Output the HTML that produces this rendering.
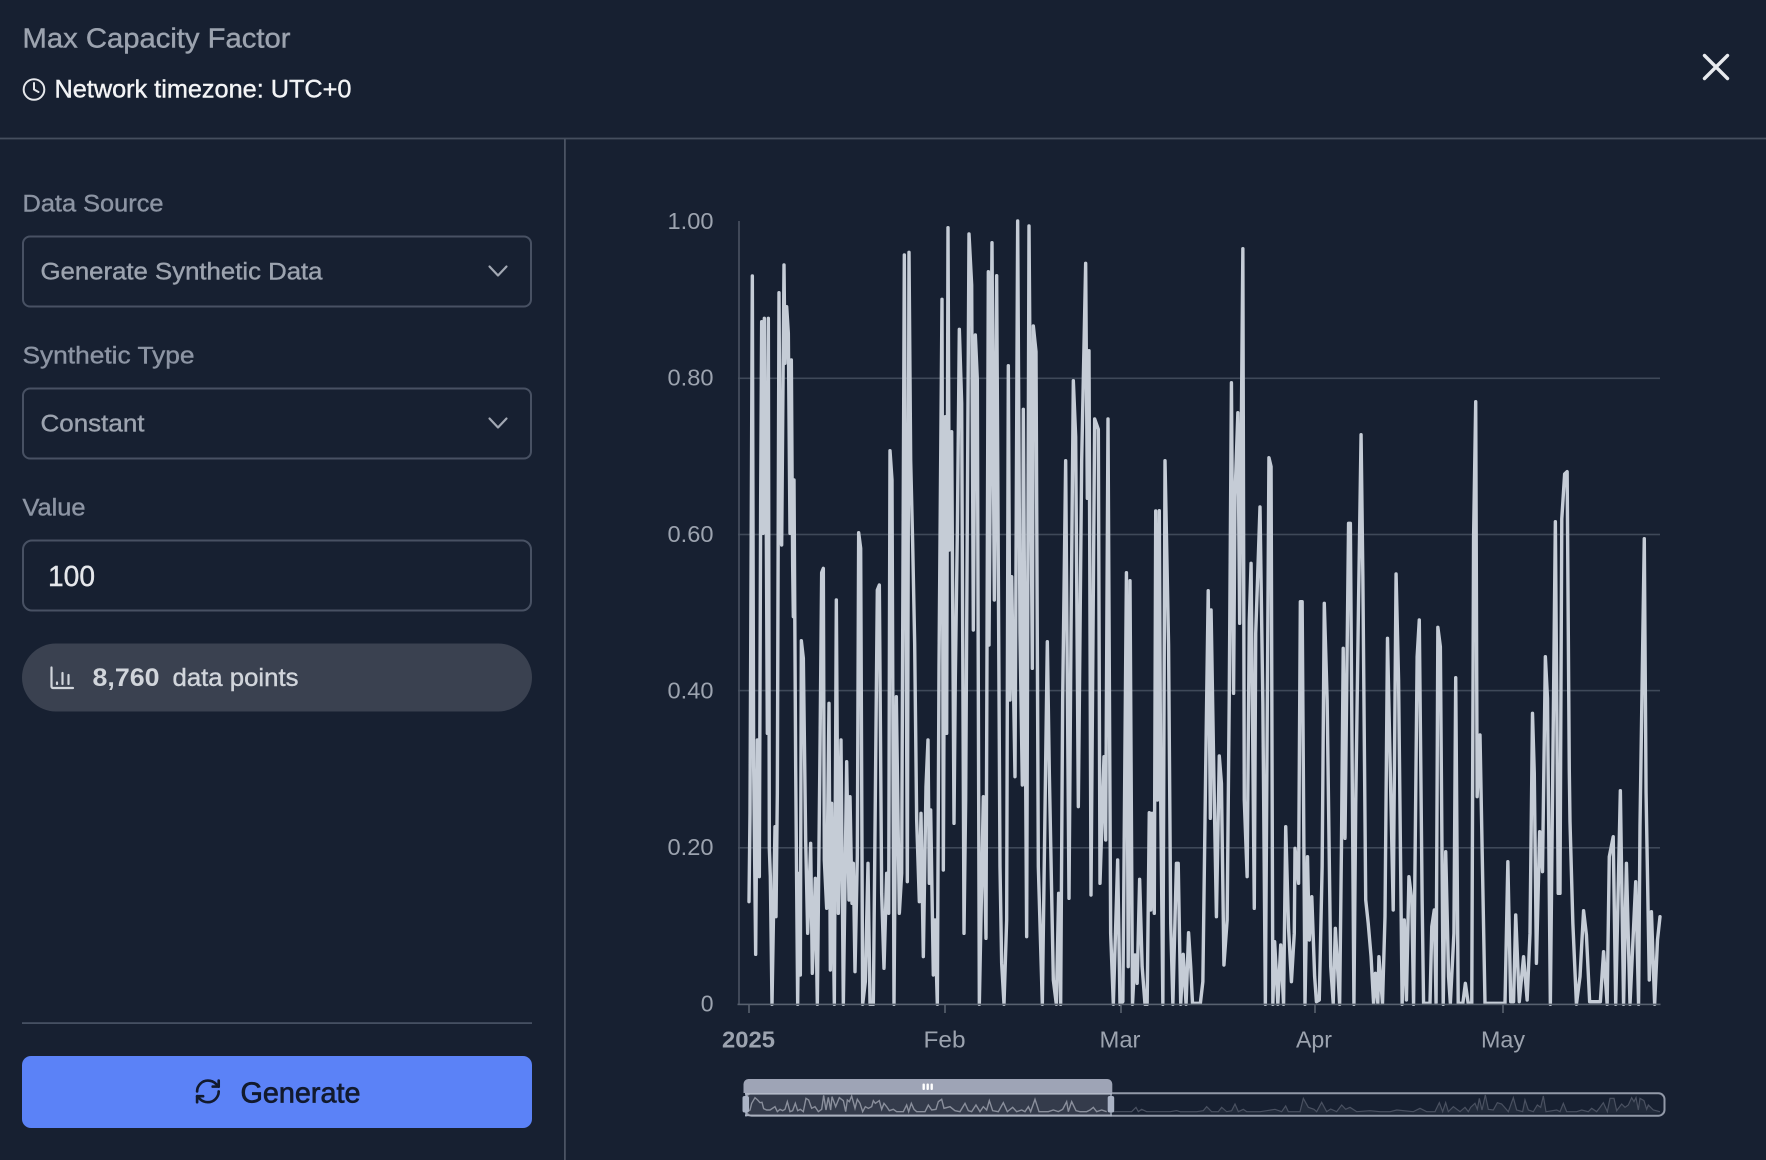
<!DOCTYPE html>
<html>
<head>
<meta charset="utf-8">
<title>Max Capacity Factor</title>
<style>
html,body{margin:0;padding:0;background:#172031;width:1766px;height:1160px;overflow:hidden}
svg{display:block}
text{font-family:"Liberation Sans",sans-serif;stroke-width:.4px}
</style>
</head>
<body>
<svg width="1766" height="1160" viewBox="0 0 1766 1160" xmlns="http://www.w3.org/2000/svg">
<rect width="1766" height="1160" fill="#172031"/>

<!-- header -->
<text x="22.5" y="47.5" font-size="28" fill="#9ca3af" stroke="#9ca3af" textLength="268" lengthAdjust="spacingAndGlyphs">Max Capacity Factor</text>
<g fill="none" stroke="#e5e7eb" stroke-width="2" stroke-linecap="round" stroke-linejoin="round">
<circle cx="34" cy="89.5" r="10.3"/>
<path d="M34 83v6.5l4.5 2.5"/>
</g>
<text x="54.5" y="97.3" font-size="25" fill="#f3f4f6" stroke="#f3f4f6" textLength="297" lengthAdjust="spacingAndGlyphs">Network timezone: UTC+0</text>
<path d="M1704.5 55.5L1727.5 78.5M1727.5 55.5L1704.5 78.5" stroke="#e8eaee" stroke-width="3.4" stroke-linecap="round" fill="none"/>
<rect x="0" y="137.6" width="1766" height="1.8" fill="#454e5e"/>
<rect x="564" y="139" width="1.8" height="1021" fill="#4a5363"/>

<!-- left form -->
<text x="22.5" y="211.7" font-size="24.5" fill="#8c94a3" stroke="#8c94a3" textLength="141" lengthAdjust="spacingAndGlyphs">Data Source</text>
<rect x="23" y="236.5" width="508" height="70" rx="7" fill="none" stroke="#485163" stroke-width="2"/>
<text x="40.5" y="279.3" font-size="24.5" fill="#9ca3af" stroke="#9ca3af" textLength="282" lengthAdjust="spacingAndGlyphs">Generate Synthetic Data</text>
<path d="M489.5 266.5l8.5 9 8.5-9" fill="none" stroke="#a2a8b3" stroke-width="2.2" stroke-linecap="round" stroke-linejoin="round"/>

<text x="22.5" y="363.3" font-size="24.5" fill="#8c94a3" stroke="#8c94a3" textLength="172" lengthAdjust="spacingAndGlyphs">Synthetic Type</text>
<rect x="23" y="388.5" width="508" height="70" rx="7" fill="none" stroke="#485163" stroke-width="2"/>
<text x="40.5" y="431.7" font-size="24.5" fill="#9ca3af" stroke="#9ca3af" textLength="104" lengthAdjust="spacingAndGlyphs">Constant</text>
<path d="M489.5 418.5l8.5 9 8.5-9" fill="none" stroke="#a2a8b3" stroke-width="2.2" stroke-linecap="round" stroke-linejoin="round"/>

<text x="22.5" y="515.6" font-size="24.5" fill="#8c94a3" stroke="#8c94a3" textLength="63" lengthAdjust="spacingAndGlyphs">Value</text>
<rect x="23" y="540.5" width="508" height="70" rx="9" fill="none" stroke="#485163" stroke-width="2"/>
<text x="48" y="586" font-size="29" fill="#e5e7eb" stroke="#e5e7eb" textLength="47" lengthAdjust="spacingAndGlyphs">100</text>

<rect x="22" y="643.5" width="510" height="68" rx="34" fill="#3a4150"/>
<g fill="none" stroke="#d1d5db" stroke-width="2.2" stroke-linecap="round" stroke-linejoin="round">
<path d="M51.5 667.5v19a1.5 1.5 0 0 0 1.5 1.5h20"/>
<path d="M57 682.5v1.5M62.5 673v11M68.5 675v9"/>
</g>
<text x="92.5" y="686" font-size="25" font-weight="700" fill="#d1d5db" textLength="67" lengthAdjust="spacingAndGlyphs">8,760</text>
<text x="172.5" y="686" font-size="25" fill="#d1d5db" stroke="#d1d5db" textLength="126" lengthAdjust="spacingAndGlyphs">data points</text>

<rect x="22" y="1022.2" width="510" height="1.8" fill="#465062"/>
<rect x="22" y="1056" width="510" height="72" rx="9" fill="#5b82f7"/>
<g transform="translate(193.5,1077) scale(1.2)" fill="none" stroke="#121a2e" stroke-width="2.2" stroke-linecap="round" stroke-linejoin="round">
<path d="M3 12a9 9 0 0 1 9-9 9.75 9.75 0 0 1 6.74 2.74L21 8"/>
<path d="M21 3v5h-5"/>
<path d="M21 12a9 9 0 0 1-9 9 9.75 9.75 0 0 1-6.74-2.74L3 16"/>
<path d="M8 16H3v5"/>
</g>
<text x="240.5" y="1102.7" font-size="29" fill="#121a2e" stroke="#121a2e" style="stroke-width:.7px" textLength="120" lengthAdjust="spacingAndGlyphs">Generate</text>

<!-- chart grid -->
<g fill="#3f4959">
<rect x="738" y="377.5" width="922" height="1.6"/>
<rect x="738" y="533.7" width="922" height="1.6"/>
<rect x="738" y="689.8" width="922" height="1.6"/>
<rect x="738" y="847" width="922" height="1.6"/>
</g>
<rect x="738.2" y="221" width="1.6" height="784" fill="#4a5363"/>

<!-- series -->
<g fill="none" stroke="#c5ccd6" stroke-width="3.4" stroke-linejoin="round" stroke-linecap="round">
<polyline vector-effect="non-scaling-stroke" transform="translate(640,200) scale(.33333,.33333)" points="327,2105 330,1840 337,228 341,1700 347,2263 352,1620 358,2030 362,900 365,365 369,1000 373,355 375,640 378,800 382,1600 385,355 388,1945 391,2030 396,2413 405,1880 408,2150 412,1780 417,278 421,1000 425,1035 432,195 435,490 440,320 445,400 450,1000 454,480 458,1100 460,1250 462,840 467,1700 473,2413 477,2020 481,2325 484,1322 490,1375 497,1920 503,2200 512,1930 517,2320 526,2035 532,2413 540,1650 545,1118 550,1105 553,1980 560,2125 567,1510 571,2310 575,1810 583,2413 589,1200 595,2140 603,1620 610,2413 620,1685 627,2100 630,1790 636,2110 640,1990 645,2315 652,1970 656,998 662,1045 668,2413 676,2345 684,1990 690,2413 700,2413 712,1170 718,1155 725,2080 732,2305 740,2020 746,2140 750,752 756,840 762,2413 769,1490 778,2140 785,2020 793,165 802,2045 807,157 812,780 818,1030 824,1330 830,1860 838,2105 843,1840 850,2270 858,1760 864,1620 868,2050 872,1830 880,2325 885,2160 892,2413 897,1400 906,298 910,2010 916,650 920,1600 924,83 928,1050 935,695 942,1870 946,1430 952,1000 958,388 965,610 972,2200 977,1800 987,102 995,255 1000,1290 1006,405 1012,540 1018,2413 1030,1790 1038,2215 1045,215 1047,1335 1056,128 1063,1200 1070,227 1080,2000 1085,2290 1092,2413 1100,2160 1105,497 1110,1500 1115,1130 1125,1730 1133,63 1140,1300 1147,1755 1150,628 1160,2210 1167,78 1177,1405 1180,378 1188,455 1195,2000 1207,2413 1222,1325 1228,1720 1240,2340 1249,2413 1256,2080 1262,2413 1268,1500 1277,782 1287,2095 1293,1300 1300,542 1307,710 1315,1820 1325,785 1337,190 1342,895 1347,452 1353,2085 1364,657 1375,688 1380,2050 1392,1670 1397,1920 1404,657 1412,2200 1420,2413 1433,1980 1440,2413"/>
<polyline vector-effect="non-scaling-stroke" transform="translate(1120,200) scale(.35714,.33333)" points="0,2413 8,2405 18,1118 23,2300 28,1142 35,2413 42,2265 48,2350 55,2038 62,2300 70,2413 76,2413 82,1838 86,2130 90,1840 96,2140 100,933 105,1800 110,932 114,1800 120,2413 126,782 136,1335 142,2170 148,2413 158,1990 163,1990 170,2413 177,2263 185,2413 192,2198 198,2300 203,2410 225,2410 232,2345 240,1700 247,1172 253,1855 255,1230 264,1800 270,2150 278,1668 284,1750 291,2295 300,2160 306,1480 312,548 318,1480 322,890 330,638 335,1270 344,146 348,1800 356,2030 362,1265 367,1090 376,2125 380,1300 392,921 400,1510 407,2413 417,773 423,800 428,2413 433,2225 442,2413 450,2235 458,2413 464,1880 472,2185 480,2345 488,2200 490,1945 500,2050 505,1205 510,1205 518,2413 525,1970 530,2220 537,2090 545,2330 550,2405 558,2400 566,2000 572,1210 580,1500 590,2300 597,2410 603,2185 615,2413 620,1950 625,1345 630,1915 640,970 645,970 655,2413 660,1815 668,1200 675,704 680,1130 688,2100 695,2170 703,2270 710,2410 715,2320 722,2410 725,2270 735,2410 742,2150 749,1315 765,2130 773,1122 780,1440 790,2413 796,2160 802,2400 809,2030 817,2100 822,2413 832,1370 838,1260 846,2100 850,2410 868,2410 873,2180 880,2130 885,2410 890,1282 897,1340 905,2413 912,1955 920,2330 925,2410 935,2200 940,1433 947,2410 960,2410 967,2350 975,2410 985,2410 990,1015 996,605 1000,1790 1008,1605 1016,2065 1022,2410 1078,2410 1086,1985 1094,2405 1102,2405 1108,2145 1118,2405 1130,2270 1140,2400 1148,2200 1155,1540 1160,1720 1166,2290 1175,1895 1183,2015 1191,1370 1197,1495 1205,2413 1219,965 1227,2080 1232,2080 1237,957 1245,822 1252,815 1258,1710 1260,1865 1268,2170 1278,2413 1288,2330 1298,2132 1306,2205 1315,2405 1345,2405 1354,2255 1364,2413 1370,1970 1381,1910 1388,2413 1401,1772 1410,2413 1418,1990 1428,2413 1444,2045 1452,2413 1456,1880 1468,1016 1473,1778 1482,2340 1488,2135 1497,2413 1505,2220 1512,2150"/>
</g>

<!-- x axis -->
<rect x="737.5" y="1003.6" width="923" height="1.6" fill="#58616f"/>
<g fill="#58616f">
<rect x="748.2" y="1004" width="1.6" height="9"/>
<rect x="944.2" y="1004" width="1.6" height="9"/>
<rect x="1120.2" y="1004" width="1.6" height="9"/>
<rect x="1314.2" y="1004" width="1.6" height="9"/>
<rect x="1502.2" y="1004" width="1.6" height="9"/>
</g>

<!-- y labels -->
<g font-size="23" fill="#9ca3af" text-anchor="end">
<text x="713.5" y="229" textLength="46" lengthAdjust="spacingAndGlyphs">1.00</text>
<text x="713.5" y="385.5" textLength="46" lengthAdjust="spacingAndGlyphs">0.80</text>
<text x="713.5" y="542" textLength="46" lengthAdjust="spacingAndGlyphs">0.60</text>
<text x="713.5" y="698.5" textLength="46" lengthAdjust="spacingAndGlyphs">0.40</text>
<text x="713.5" y="855" textLength="46" lengthAdjust="spacingAndGlyphs">0.20</text>
<text x="713.5" y="1011.5">0</text>
</g>
<!-- x labels -->
<g font-size="23" fill="#9ca3af">
<text x="722" y="1047.5" font-weight="700" textLength="53" lengthAdjust="spacingAndGlyphs">2025</text>
<text x="923.5" y="1047.5" textLength="42" lengthAdjust="spacingAndGlyphs">Feb</text>
<text x="1099.5" y="1047.5" textLength="41" lengthAdjust="spacingAndGlyphs">Mar</text>
<text x="1296" y="1047.5" textLength="36" lengthAdjust="spacingAndGlyphs">Apr</text>
<text x="1481" y="1047.5" textLength="44" lengthAdjust="spacingAndGlyphs">May</text>
</g>

<!-- data zoom slider -->
<rect x="745" y="1093" width="367" height="22.5" fill="#343b4b"/>
<path transform="translate(1180,1060) scale(.33333)" fill="#222b3b" d="M0,155 50,155 70,152 80,140 95,155 115,155 125,142 140,155 155,152 165,132 175,155 190,148 200,155 240,155 260,152 285,148 305,155 317,138 325,155 360,155 370,115 385,142 402,148 410,155 425,127 440,155 452,147 470,155 485,135 497,148 510,142 530,155 570,152 600,155 630,155 650,150 700,155 720,145 740,155 765,155 778,128 788,155 797,128 805,155 820,140 840,155 855,142 865,155 872,142 885,130 892,148 898,115 906,150 916,105 925,148 940,150 952,128 965,132 985,155 1000,113 1010,150 1028,155 1035,120 1045,150 1060,155 1072,135 1082,142 1090,108 1098,155 1130,150 1140,155 1150,130 1160,155 1190,155 1205,150 1225,155 1235,145 1250,155 1260,142 1270,128 1282,155 1290,115 1302,115 1310,152 1325,132 1335,142 1345,135 1355,113 1362,125 1368,113 1375,150 1380,115 1392,122 1400,148 1405,135 1420,150 1440,155 1440,160 0,160Z"/>
<polyline vector-effect="non-scaling-stroke" transform="translate(720,1060) scale(.33333)" fill="none" stroke="#8a8f9c" stroke-width="1.4" points="82,155 90,150 95,130 105,113 113,120 120,128 126,127 131,146 140,150 150,150 165,140 172,155 180,148 188,152 195,148 202,125 210,155 218,152 226,130 233,152 241,148 250,155 258,115 266,120 275,145 285,140 295,155 305,148 311,106 318,150 325,112 332,150 336,110 347,140 358,113 370,122 377,155 382,120 388,125 395,108 405,145 412,118 420,130 428,155 436,140 445,145 455,140 460,122 466,130 478,122 485,148 492,130 500,140 508,152 520,148 530,155 550,155 560,135 566,155 574,130 582,148 590,155 615,155 625,135 635,150 648,148 655,125 665,118 672,145 690,140 705,152 720,155 735,130 745,152 755,155 768,135 780,155 790,140 800,150 808,122 818,152 835,155 850,128 862,155 878,142 890,155 905,150 915,155 925,140 932,155 945,118 957,155 985,155 1000,150 1015,155 1028,148 1040,125 1045,155 1055,125 1068,152 1080,155 1100,155 1110,150 1120,142 1130,155 1145,150 1160,155"/>
<polyline vector-effect="non-scaling-stroke" transform="translate(720,1060) scale(.33333)" fill="none" stroke="#4a5161" stroke-width="1.2" points="1175,155 1200,155 1235,155 1248,142 1255,155 1265,148 1280,155 1300,155 1350,155 1370,152 1380,155"/>
<polyline vector-effect="non-scaling-stroke" transform="translate(1180,1060) scale(.33333)" fill="none" stroke="#4a5161" stroke-width="1.2" points="0,155 50,155 70,152 80,140 95,155 115,155 125,142 140,155 155,152 165,132 175,155 190,148 200,155 240,155 260,152 285,148 305,155 317,138 325,155 360,155 370,115 385,142 402,148 410,155 425,127 440,155 452,147 470,155 485,135 497,148 510,142 530,155 570,152 600,155 630,155 650,150 700,155 720,145 740,155 765,155 778,128 788,155 797,128 805,155 820,140 840,155 855,142 865,155 872,142 885,130 892,148 898,115 906,150 916,105 925,148 940,150 952,128 965,132 985,155 1000,113 1010,150 1028,155 1035,120 1045,150 1060,155 1072,135 1082,142 1090,108 1098,155 1130,150 1140,155 1150,130 1160,155 1190,155 1205,150 1225,155 1235,145 1250,155 1260,142 1270,128 1282,155 1290,115 1302,115 1310,152 1325,132 1335,142 1345,135 1355,113 1362,125 1368,113 1375,150 1380,115 1392,122 1400,148 1405,135 1420,150 1440,155"/>
<rect x="745.5" y="1093.3" width="919" height="22.4" rx="6" fill="none" stroke="#9299a8" stroke-width="2"/>
<path d="M743.5 1093v-9a5 5 0 0 1 5-5h358.8a5 5 0 0 1 5 5v9z" fill="#9ea4b6"/>
<rect x="745" y="1093" width="367" height="1.6" fill="#b4bac8"/>
<rect x="745" y="1114.6" width="367" height="1.6" fill="#aab0be"/>
<g fill="#ffffff">
<rect x="922.5" y="1083.5" width="2.4" height="6.5" rx="1"/>
<rect x="926.5" y="1083.5" width="2.4" height="6.5" rx="1"/>
<rect x="930.5" y="1083.5" width="2.4" height="6.5" rx="1"/>
</g>
<rect x="745.4" y="1093" width="1.2" height="23.5" fill="#aab3c5"/>
<rect x="742.5" y="1096" width="6.5" height="16.5" rx="2" fill="#aab3c5"/>
<rect x="1110.4" y="1093" width="1.2" height="23.5" fill="#aab3c5"/>
<rect x="1107.7" y="1096" width="6.5" height="16.5" rx="2" fill="#aab3c5"/>
</svg>
</body>
</html>
